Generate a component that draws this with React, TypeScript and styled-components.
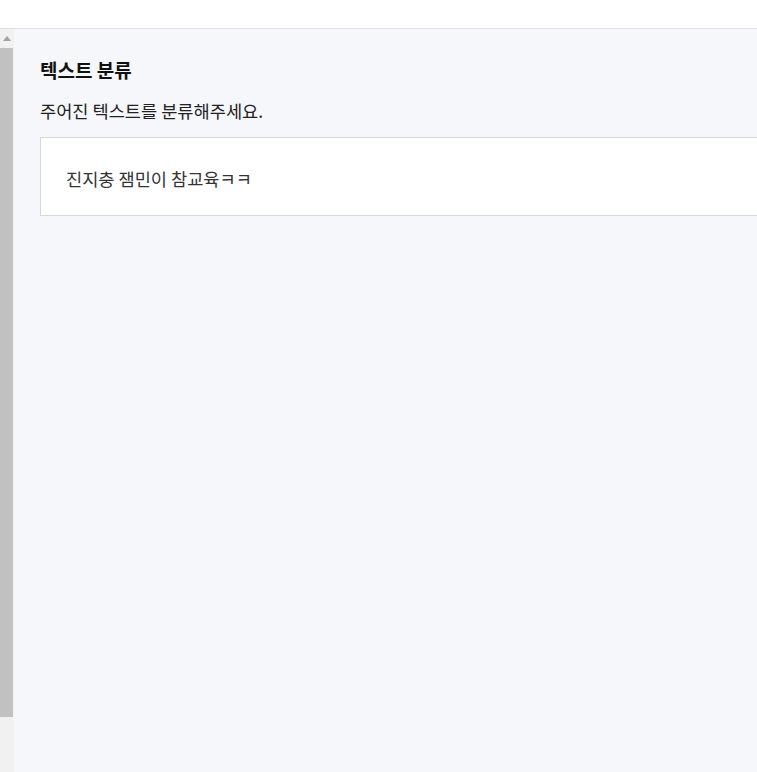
import React from "react";
import styled, { createGlobalStyle } from "styled-components";

const Global = createGlobalStyle`
  html, body { margin: 0; padding: 0; background: #ffffff; overflow: hidden; }
  body { font-family: "Noto Sans CJK KR", "Noto Sans", sans-serif; }
`;

const Page = styled.div`
  width: 757px;
  height: 772px;
  display: flex;
  flex-direction: column;
  overflow: hidden;
`;

const TopBar = styled.div`
  height: 28px;
  flex: none;
  background: #ffffff;
  border-bottom: 1px solid #dcdfe4;
`;

const Body = styled.div`
  flex: 1;
  display: flex;
  min-height: 0;
`;

const Scrollbar = styled.div`
  width: 14px;
  flex: none;
  background: #f1f1f1;
  display: flex;
  flex-direction: column;
  align-items: center;
  padding-bottom: 55px;
`;

const Arrow = styled.div`
  height: 19px;
  flex: none;
  display: flex;
  align-items: center;
  justify-content: center;
`;

const Thumb = styled.div`
  flex: 1;
  width: 13px;
  align-self: flex-start;
  background: #c1c1c1;
`;

const Content = styled.main`
  flex: 1;
  background: #f6f7fb;
  padding: 27px 0 0 26px;
  overflow: hidden;
`;

const Title = styled.h2`
  margin: 0;
  font-size: 19px;
  font-weight: 700;
  line-height: 28px;
  color: #111111;
`;

const Subtitle = styled.p`
  margin: 15px 0 0;
  font-size: 17.6px;
  line-height: 24px;
  color: #222222;
`;

const Card = styled.div`
  margin-top: 14px;
  width: 900px;
  height: 79px;
  box-sizing: border-box;
  background: #ffffff;
  border: 1px solid #d3d7de;
  display: flex;
  align-items: center;
  padding: 3px 0 0 25px;
  font-size: 17.6px;
  color: #333333;
`;

export default function App() {
  return (
    <>
      <Global />
      <Page>
        <TopBar />
        <Body>
          <Scrollbar>
            <Arrow>
              <svg width="8" height="5" viewBox="0 0 8 5">
                <path d="M0 5 L4 0 L8 5 Z" fill="#a3a3a3" />
              </svg>
            </Arrow>
            <Thumb />
          </Scrollbar>
          <Content>
            <Title>텍스트 분류</Title>
            <Subtitle>주어진 텍스트를 분류해주세요.</Subtitle>
            <Card>진지충 잼민이 참교육ㅋㅋ</Card>
          </Content>
        </Body>
      </Page>
    </>
  );
}
